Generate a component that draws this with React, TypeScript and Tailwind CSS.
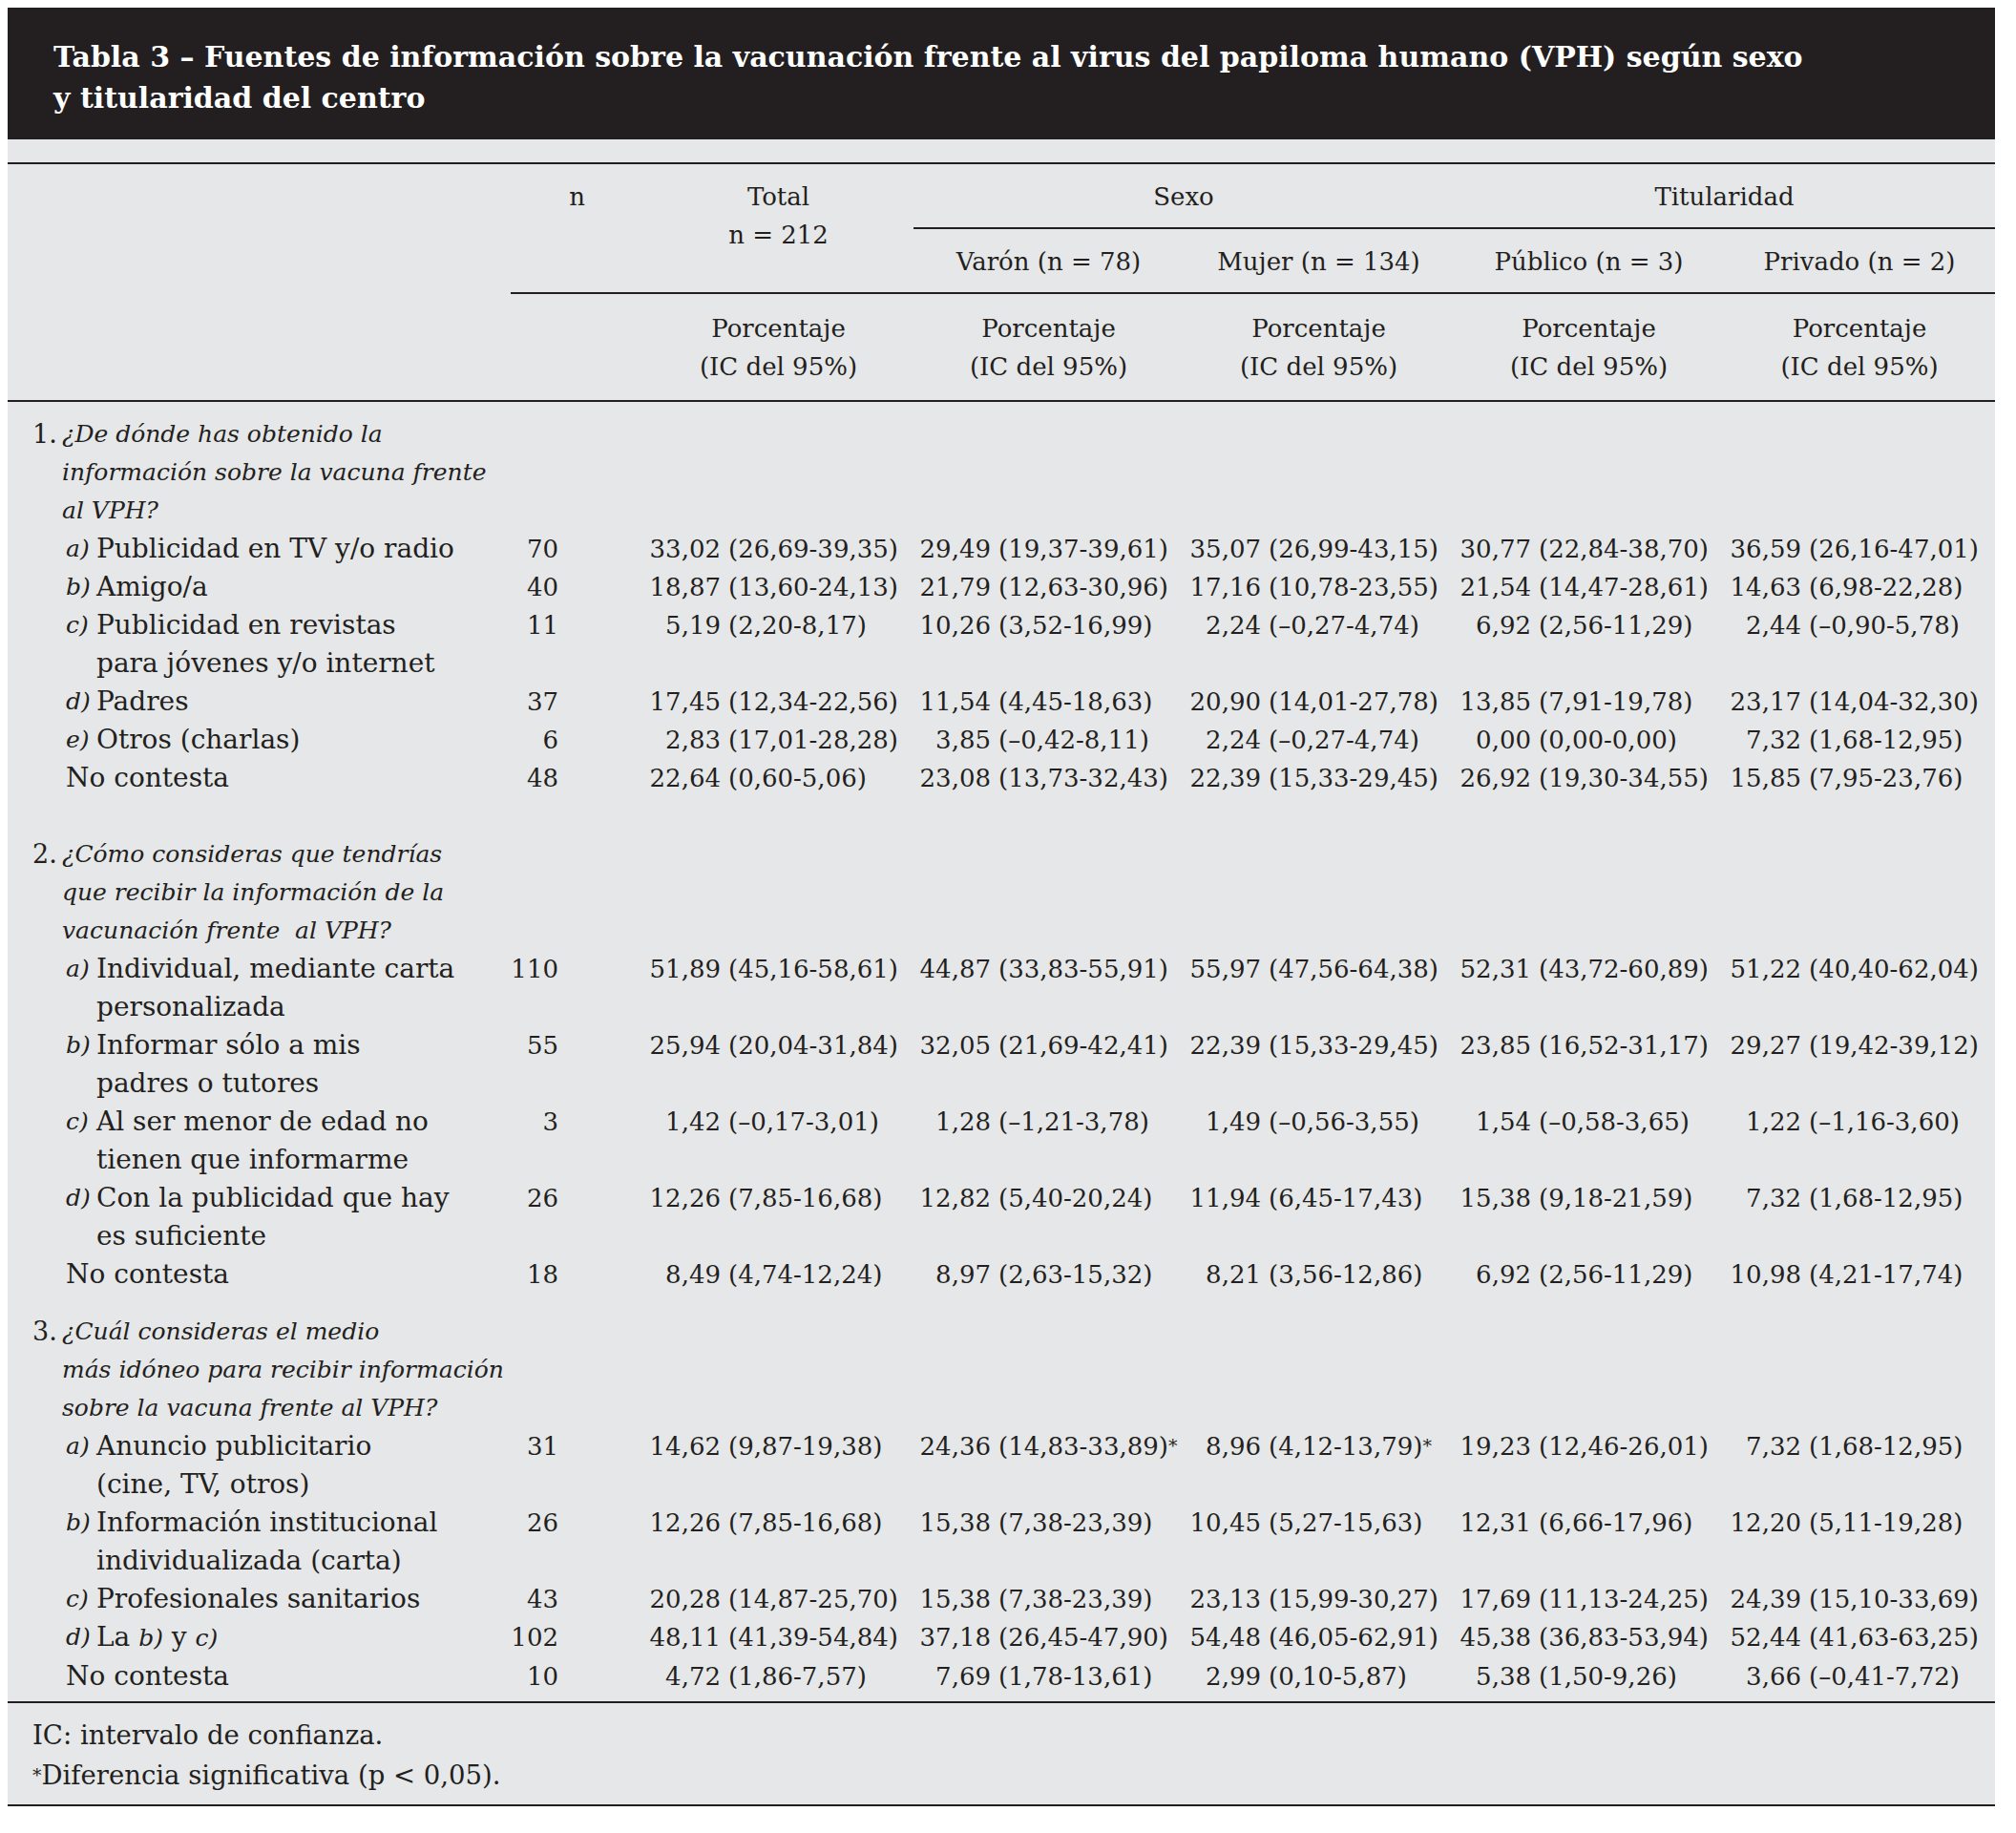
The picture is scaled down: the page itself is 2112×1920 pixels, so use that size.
import type { ReactNode } from "react";

const COLS = "grid grid-cols-[527px_139px_283px_283px_283px_283px_284px]";

type Val = [string, string, boolean?];

interface Item {
  tag?: string;
  lines: ReactNode[];
  n: string;
  vals: Val[];
}

interface Section {
  num: string;
  question: string[];
  items: Item[];
  gap: string;
}

const sections: Section[] = [
  {
    num: "1.",
    question: ["¿De dónde has obtenido la", "información sobre la vacuna frente", "al VPH?"],
    gap: "pb-[40px]",
    items: [
      {
        tag: "a)",
        lines: ["Publicidad en TV y/o radio"],
        n: "70",
        vals: [["33,02", "(26,69-39,35)"], ["29,49", "(19,37-39,61)"], ["35,07", "(26,99-43,15)"], ["30,77", "(22,84-38,70)"], ["36,59", "(26,16-47,01)"]],
      },
      {
        tag: "b)",
        lines: ["Amigo/a"],
        n: "40",
        vals: [["18,87", "(13,60-24,13)"], ["21,79", "(12,63-30,96)"], ["17,16", "(10,78-23,55)"], ["21,54", "(14,47-28,61)"], ["14,63", "(6,98-22,28)"]],
      },
      {
        tag: "c)",
        lines: ["Publicidad en revistas", "para jóvenes y/o internet"],
        n: "11",
        vals: [["5,19", "(2,20-8,17)"], ["10,26", "(3,52-16,99)"], ["2,24", "(–0,27-4,74)"], ["6,92", "(2,56-11,29)"], ["2,44", "(–0,90-5,78)"]],
      },
      {
        tag: "d)",
        lines: ["Padres"],
        n: "37",
        vals: [["17,45", "(12,34-22,56)"], ["11,54", "(4,45-18,63)"], ["20,90", "(14,01-27,78)"], ["13,85", "(7,91-19,78)"], ["23,17", "(14,04-32,30)"]],
      },
      {
        tag: "e)",
        lines: ["Otros (charlas)"],
        n: "6",
        vals: [["2,83", "(17,01-28,28)"], ["3,85", "(–0,42-8,11)"], ["2,24", "(–0,27-4,74)"], ["0,00", "(0,00-0,00)"], ["7,32", "(1,68-12,95)"]],
      },
      {
        lines: ["No contesta"],
        n: "48",
        vals: [["22,64", "(0,60-5,06)"], ["23,08", "(13,73-32,43)"], ["22,39", "(15,33-29,45)"], ["26,92", "(19,30-34,55)"], ["15,85", "(7,95-23,76)"]],
      },
    ],
  },
  {
    num: "2.",
    question: ["¿Cómo consideras que tendrías", "que recibir la información de la", "vacunación frente\u00a0 al VPH?"],
    gap: "pb-[20px]",
    items: [
      {
        tag: "a)",
        lines: ["Individual, mediante carta", "personalizada"],
        n: "110",
        vals: [["51,89", "(45,16-58,61)"], ["44,87", "(33,83-55,91)"], ["55,97", "(47,56-64,38)"], ["52,31", "(43,72-60,89)"], ["51,22", "(40,40-62,04)"]],
      },
      {
        tag: "b)",
        lines: ["Informar sólo a mis", "padres o tutores"],
        n: "55",
        vals: [["25,94", "(20,04-31,84)"], ["32,05", "(21,69-42,41)"], ["22,39", "(15,33-29,45)"], ["23,85", "(16,52-31,17)"], ["29,27", "(19,42-39,12)"]],
      },
      {
        tag: "c)",
        lines: ["Al ser menor de edad no", "tienen que informarme"],
        n: "3",
        vals: [["1,42", "(–0,17-3,01)"], ["1,28", "(–1,21-3,78)"], ["1,49", "(–0,56-3,55)"], ["1,54", "(–0,58-3,65)"], ["1,22", "(–1,16-3,60)"]],
      },
      {
        tag: "d)",
        lines: ["Con la publicidad que hay", "es suficiente"],
        n: "26",
        vals: [["12,26", "(7,85-16,68)"], ["12,82", "(5,40-20,24)"], ["11,94", "(6,45-17,43)"], ["15,38", "(9,18-21,59)"], ["7,32", "(1,68-12,95)"]],
      },
      {
        lines: ["No contesta"],
        n: "18",
        vals: [["8,49", "(4,74-12,24)"], ["8,97", "(2,63-15,32)"], ["8,21", "(3,56-12,86)"], ["6,92", "(2,56-11,29)"], ["10,98", "(4,21-17,74)"]],
      },
    ],
  },
  {
    num: "3.",
    question: ["¿Cuál consideras el medio", "más idóneo para recibir información", "sobre la vacuna frente al VPH?"],
    gap: "pb-[6px]",
    items: [
      {
        tag: "a)",
        lines: ["Anuncio publicitario", "(cine, TV, otros)"],
        n: "31",
        vals: [["14,62", "(9,87-19,38)"], ["24,36", "(14,83-33,89)", true], ["8,96", "(4,12-13,79)", true], ["19,23", "(12,46-26,01)"], ["7,32", "(1,68-12,95)"]],
      },
      {
        tag: "b)",
        lines: ["Información institucional", "individualizada (carta)"],
        n: "26",
        vals: [["12,26", "(7,85-16,68)"], ["15,38", "(7,38-23,39)"], ["10,45", "(5,27-15,63)"], ["12,31", "(6,66-17,96)"], ["12,20", "(5,11-19,28)"]],
      },
      {
        tag: "c)",
        lines: ["Profesionales sanitarios"],
        n: "43",
        vals: [["20,28", "(14,87-25,70)"], ["15,38", "(7,38-23,39)"], ["23,13", "(15,99-30,27)"], ["17,69", "(11,13-24,25)"], ["24,39", "(15,10-33,69)"]],
      },
      {
        tag: "d)",
        lines: [
          <>
            La <i className="text-[25px]">b)</i> y <i className="text-[25px]">c)</i>
          </>,
        ],
        n: "102",
        vals: [["48,11", "(41,39-54,84)"], ["37,18", "(26,45-47,90)"], ["54,48", "(46,05-62,91)"], ["45,38", "(36,83-53,94)"], ["52,44", "(41,63-63,25)"]],
      },
      {
        lines: ["No contesta"],
        n: "10",
        vals: [["4,72", "(1,86-7,57)"], ["7,69", "(1,78-13,61)"], ["2,99", "(0,10-5,87)"], ["5,38", "(1,50-9,26)"], ["3,66", "(–0,41-7,72)"]],
      },
    ],
  },
];

function ValueCell({ v }: { v: Val }) {
  return (
    <div className="flex whitespace-nowrap text-[26px]">
      <span className="w-[89px] shrink-0 pr-[8px] text-right">{v[0]}</span>
      <span>
        {v[1]}
        {v[2] && <sup className="relative -top-[3px] text-[19px]">*</sup>}
      </span>
    </div>
  );
}

function ItemRow({ item }: { item: Item }) {
  return (
    <div className={COLS}>
      <div className="flex whitespace-nowrap pl-[61px] text-[28px]">
        {item.tag && <span className="w-[32px] shrink-0 text-[25px] italic">{item.tag}</span>}
        <div>
          {item.lines.map((l, i) => (
            <div key={i}>{l}</div>
          ))}
        </div>
      </div>
      <div className="pr-[89px] text-right text-[26px]">{item.n}</div>
      {item.vals.map((v, i) => (
        <ValueCell key={i} v={v} />
      ))}
    </div>
  );
}

export default function App() {
  return (
    <div className="min-h-[1920px] bg-white p-[8px] font-['DejaVu_Serif',serif] text-[#231f20]">
      <div className="w-[2082px]">
        <div className="h-[138px] bg-[#231f20] pl-[48px] pt-[30px] text-[30px] font-bold leading-[43px] text-white">
          <div>Tabla 3 – Fuentes de información sobre la vacunación frente al virus del papiloma humano (VPH) según sexo</div>
          <div>y titularidad del centro</div>
        </div>

        <div className="bg-[#e6e7e8] pt-[24px] text-[27px] leading-[40px]">
          {/* column headings */}
          <div className={`${COLS} grid-rows-[68px_68px_111px] border-y-2 border-[#231f20] text-[26px]`}>
            <div className="col-start-1 row-span-3 row-start-1" />
            <div className="col-start-2 row-span-2 row-start-1 border-b-2 border-[#231f20] pt-[14px] text-center">n</div>
            <div className="col-start-3 row-span-2 row-start-1 border-b-2 border-[#231f20] pt-[14px] text-center">
              <div>Total</div>
              <div>n = 212</div>
            </div>
            <div className="col-span-2 col-start-4 row-start-1 border-b-2 border-[#231f20] pt-[14px] text-center">Sexo</div>
            <div className="col-span-2 col-start-6 row-start-1 border-b-2 border-[#231f20] pt-[14px] text-center">Titularidad</div>
            <div className="col-start-4 row-start-2 border-b-2 border-[#231f20] pt-[14px] text-center">Varón (n = 78)</div>
            <div className="col-start-5 row-start-2 border-b-2 border-[#231f20] pt-[14px] text-center">Mujer (n = 134)</div>
            <div className="col-start-6 row-start-2 border-b-2 border-[#231f20] pt-[14px] text-center">Público (n = 3)</div>
            <div className="col-start-7 row-start-2 border-b-2 border-[#231f20] pt-[14px] text-center">Privado (n = 2)</div>
            {[3, 4, 5, 6, 7].map((c) => (
              <div
                key={c}
                className={`row-start-3 pt-[16px] text-center ${
                  c === 3 ? "col-start-3" : c === 4 ? "col-start-4" : c === 5 ? "col-start-5" : c === 6 ? "col-start-6" : "col-start-7"
                }`}
              >
                <div>Porcentaje</div>
                <div>(IC del 95%)</div>
              </div>
            ))}
          </div>

          {/* body */}
          <div className="border-b-2 border-[#231f20] pt-[14px]">
            {sections.map((s) => (
              <div key={s.num} className={s.gap}>
                <div className="flex whitespace-nowrap pl-[26px]">
                  <span className="w-[31px] shrink-0">{s.num}</span>
                  <div className="text-[25px] italic">
                    {s.question.map((q, i) => (
                      <div key={i}>{q}</div>
                    ))}
                  </div>
                </div>
                {s.items.map((it, i) => (
                  <ItemRow key={i} item={it} />
                ))}
              </div>
            ))}
          </div>

          <div className="border-b-2 border-[#231f20] pb-[10px] pl-[26px] pt-[12px] text-[27.5px] leading-[42px]">
            <div>IC: intervalo de confianza.</div>
            <div>
              <sup className="relative -top-[3px] text-[19px]">*</sup>Diferencia significativa (p &lt; 0,05).
            </div>
          </div>
        </div>
      </div>
    </div>
  );
}
